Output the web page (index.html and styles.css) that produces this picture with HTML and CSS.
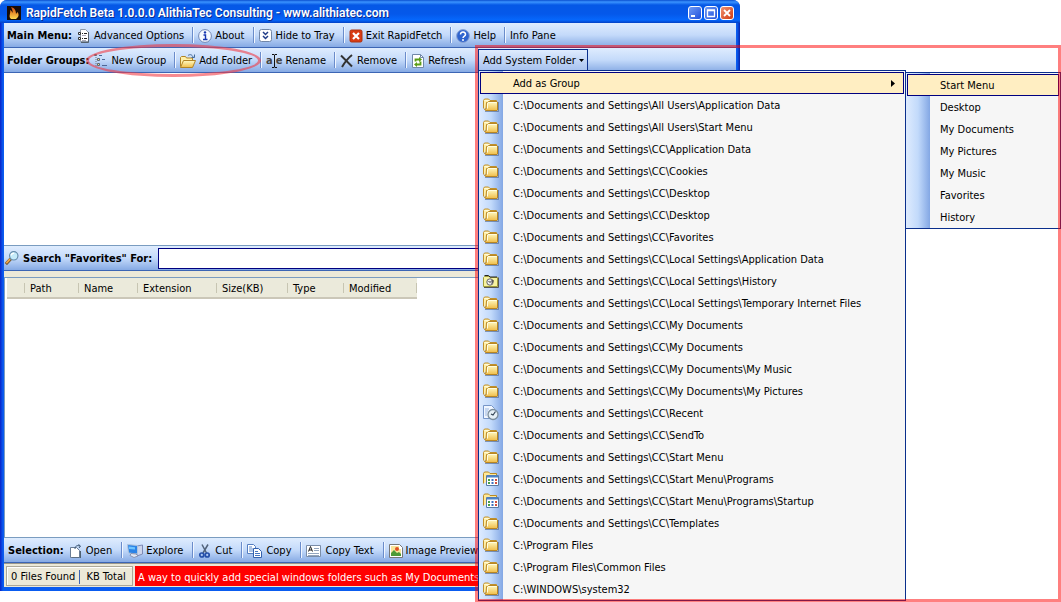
FILE: index.html
```html
<!DOCTYPE html>
<html lang="en">
<head>
<meta charset="utf-8">
<title>RapidFetch Beta</title>
<link rel="stylesheet" href="styles.css">
</head>
<body>
<svg class="sprite" aria-hidden="true">
  <defs>
    <linearGradient id="gold" x1="0" y1="0" x2="0" y2="1"><stop offset="0" stop-color="#fffbc4"/><stop offset="1" stop-color="#f0bd48"/></linearGradient>
    <linearGradient id="flame" x1="0" y1="0" x2="0" y2="1"><stop offset="0" stop-color="#d84a08"/><stop offset="1" stop-color="#ffd850"/></linearGradient>
    <symbol id="folder" viewBox="0 0 16 16">
      <path d="M2 14.500h13.500V5" fill="none" stroke="#4a5f86" opacity=".6"/>
      <path d="M.5 11.500V3.500l1-1.500h4L7 3.500h6.500v2" fill="#fff0a8" stroke="#c0902c"/>
      <path d="M1.500 3.500h4.500l1 1.500h6" fill="none" stroke="#fff9d8"/>
      <path d="M3.500 5.500h1l1-1h8.500l.5.5v8l-.5.5h-11.500l-1-1.500h1.500z" fill="url(#gold)" stroke="#b98622"/>
      <path d="M4.500 11.500V6l.5-.5h8.500" fill="none" stroke="#fffde0"/>
    </symbol>
    <symbol id="history" viewBox="0 0 16 16">
      <path d="M.5 13.500V4.500l1-1H6l1 1h7.500v9z" fill="#f6f2a0" stroke="#a09c38"/>
      <path d="M1.500 2.500h4l1.500 1.500h7" fill="none" stroke="#222"/>
      <path d="M1 14.500h14.500V4.500" fill="none" stroke="#555"/>
      <circle cx="7" cy="9" r="3.200" fill="#eee" stroke="#666"/><path d="M5.500 8l1.500 1.500L9.500 7M8.500 10.500l2-3" fill="none" stroke="#333"/>
    </symbol>
    <symbol id="recent" viewBox="0 0 16 16">
      <path d="M.5.5h8l3 3v10H.5z" fill="#f0f6ff" stroke="#7796c8"/><path d="M2 4h4M2 6h3M2 8h2M2 10h2" stroke="#9db8e0"/>
      <circle cx="10" cy="9.500" r="5" fill="#e6f0f6" stroke="#7b8d9c" stroke-width="1.300"/><path d="M12.500 6.500L10 10l-2-1" fill="none" stroke="#345" stroke-width="1.200"/>
    </symbol>
    <symbol id="programs" viewBox="0 0 16 16">
      <path d="M.5 12.500V2.500l1-1.500h4L7 2.500h6.500v3" fill="#ffe999" stroke="#b98a24"/>
      <path d="M3.500 4.500h12v10h-12z" fill="#fff" stroke="#587aa4"/><path d="M4 5.500h11" stroke="#4c83c8" stroke-width="2"/>
      <path d="M5 9h2M5 12h2" stroke="#4a9f45" stroke-width="2"/><path d="M8.500 9h2M8.500 12h2" stroke="#3d6fc0" stroke-width="2"/><path d="M12 9h2M12 12h2" stroke="#d05040" stroke-width="2"/>
    </symbol>
    <symbol id="options" viewBox="0 0 14 14">
      <path d="M3.500.5h5l3 3v9h-8z" fill="#fff" stroke="#8d99a8"/><path d="M11.500 3v10.500H4" fill="none" stroke="#53606d"/>
      <path d="M1.500 3.500h2v2h-2zM1.500 8.500h2v2h-2z" fill="#fff" stroke="#333"/><path d="M5 4.500h1M7 4.500h3M5 9.500h1M7 9.500h3" stroke="#222"/><path d="M5 6.500h4M5 11.500h4" stroke="#aab"/>
    </symbol>
    <symbol id="about" viewBox="0 0 14 14"><circle cx="7" cy="7" r="6.400" fill="#f6faff" stroke="#7186b4"/><path d="M5.500 6h2v4M5 10.500h4.500" fill="none" stroke="#1636b0" stroke-width="1.400"/><circle cx="7" cy="3.400" r="1.200" fill="#1636b0"/></symbol>
    <symbol id="hide" viewBox="0 0 14 14"><rect x=".5" y=".5" width="12" height="12" rx="2" fill="#fff" stroke="#7186a8"/><path d="M4 3l2.500 2.500L9 3M4 7l2.500 2.500L9 7" fill="none" stroke="#203c88" stroke-width="1.500"/></symbol>
    <symbol id="exit" viewBox="0 0 14 14"><rect x="1" y="1" width="12" height="12" rx="1.500" fill="#d93b13" stroke="#a93212"/><path d="M4 4l6 6M10 4l-6 6" stroke="#fff" stroke-width="2.200"/></symbol>
    <symbol id="help" viewBox="0 0 14 14"><circle cx="7" cy="7" r="6.400" fill="#2e63ce" stroke="#8ba4d4"/><path d="M4.500 5.500c0-3.500 5-3 5 0 0 1.700-2.500 1.500-2.500 3.500" fill="none" stroke="#fff" stroke-width="1.500"/><circle cx="7" cy="11" r="1" fill="#fff"/></symbol>
    <symbol id="newgroup" viewBox="0 0 14 14"><path d="M.5.500h2v1h-2zM3.500 4.500h2v2h-2zM3.500 9.500h2v2h-2z" fill="#ffe27a" stroke="#5b6678"/><path d="M2 3v9" stroke="#777" stroke-dasharray="1 1"/><path d="M5 1.500h3M8 5.500h3M8 11.500h5" stroke="#4f6796"/></symbol>
    <symbol id="openfolder" viewBox="0 0 16 14">
      <path d="M.5 12.500v-9l1-1h4l1 1.500h6v3" fill="#fff0a8" stroke="#b18426"/><path d="M.5 13.500l3-7h12l-3 7z" fill="url(#gold)" stroke="#b18426"/>
      <path d="M8 1.500c2-1.500 4-1 5 1.500M14.500.5v3h-3" fill="none" stroke="#456c9b"/>
    </symbol>
    <symbol id="remove" viewBox="0 0 14 14"><path d="M1 1.500c3 3 6 6 11 11" fill="none" stroke="#333" stroke-width="2"/><path d="M12 1C8 4 5 8 2 13" fill="none" stroke="#333" stroke-width="2"/></symbol>
    <symbol id="refresh" viewBox="0 0 14 14"><path d="M1.500.5h8l3 3v10h-11z" fill="#fff" stroke="#7088a8"/><path d="M9.500.5v3h3" fill="none" stroke="#7088a8"/><path d="M4.500 7.500V5.500h4M9.500 7.500v3h-4" fill="none" stroke="#5b9d16" stroke-width="1.800"/><path d="M8 3l3 2.500L8 8zM6 8l-3 2.500L6 13z" fill="#5b9d16"/></symbol>
    <symbol id="search" viewBox="0 0 16 16"><path d="M1 15l5.500-6" stroke="#74552b" stroke-width="3.500"/><path d="M1.500 14L6 9" stroke="#f3a749" stroke-width="2"/><circle cx="10" cy="5.500" r="4.800" fill="#c5ebfa" stroke="#6389a8" stroke-width="1.300"/><path d="M7 5c.5-2 2-2.500 3.500-2.500" fill="none" stroke="#fff" stroke-width="1.500"/></symbol>
    <symbol id="open" viewBox="0 0 14 14"><path d="M1.500 3.500h6l3 3v7h-9z" fill="#fff" stroke="#6a7d96"/><path d="M11.500 7v7H3" fill="none" stroke="#4f6070"/><path d="M6 5c0-3 2-4 5-3M9.500.5l2 1.500-1.500 2" fill="none" stroke="#3b5674"/></symbol>
    <symbol id="explore" viewBox="0 0 16 14"><path d="M10 2l5.500-1v9l-5.500 2z" fill="#cdd5ec" stroke="#7d8ab6"/><path d="M.5.500l10 1v8.500l-9-1z" fill="#2c83e6" stroke="#b1c4dc"/><path d="M2 2.500l6 .7V5.500L2 5z" fill="#6ec4ff"/><path d="M4 9.500l5 .5 2 2-4 1.500-4-2z" fill="#e3e8f4" stroke="#8893b2"/></symbol>
    <symbol id="cut" viewBox="0 0 14 14"><path d="M4 .5L8.500 9M10 .5L5 9" stroke="#52637a" stroke-width="1.500"/><circle cx="3.800" cy="11" r="2" fill="none" stroke="#244fa9" stroke-width="1.700"/><circle cx="9.200" cy="11" r="2" fill="none" stroke="#244fa9" stroke-width="1.700"/></symbol>
    <symbol id="copy" viewBox="0 0 16 14"><path d="M.5.500h6l2 2v7h-8z" fill="#fff" stroke="#547dc0"/><path d="M2 3h3M2 5h4M2 7h4" stroke="#5d89cc"/><path d="M6.500 4.500h5l3 3v6h-8z" fill="#fff" stroke="#3260ad"/><path d="M8 7.500h3M8 9.500h5M8 11.500h5" stroke="#4474c0"/></symbol>
    <symbol id="copytext" viewBox="0 0 16 14"><path d="M.5 1.500h14v11H.5z" fill="#fff" stroke="#7a8da8"/><path d="M2.500 7.500l2-5 2 5M3 6h3" fill="none" stroke="#222"/><path d="M8 4.500h5M8 6.500h5M2 9.500h11M2 11.500h11" stroke="#93a5be"/></symbol>
    <symbol id="image" viewBox="0 0 14 14"><path d="M.5.5h10l3 3v10H.500z" fill="#fff" stroke="#777"/><path d="M2 2h8v3h2v7H2z" fill="#f8e59a"/><circle cx="8" cy="5" r="2" fill="#e05024"/><path d="M2 12V9l3-3 3 3 2-1 2 2v2z" fill="#4d9a36"/></symbol>
    <symbol id="app" viewBox="0 0 14 14"><path d="M0 0h14v14H0z" fill="#180c08"/><path d="M4 13C1 10 4 8 3 4c2 1 2 2 2.500 3C6 5 5 3 4 1c4 1 5 4 5 7l1.500-2c2 3 1 5-1.500 7z" fill="url(#flame)"/></symbol>
  </defs>
</svg>

<div class="desktop">
  <main class="window">
    <header class="titlebar">
      <svg class="icon"><use href="#app"/></svg>
      <h1>RapidFetch Beta 1.0.0.0 AlithiaTec Consulting - www.alithiatec.com</h1>
      <button class="control" aria-label="Minimize"><svg viewBox="0 0 12 12"><path d="M2 9h4" stroke="#fff" stroke-width="2"/></svg></button>
      <button class="control" aria-label="Maximize"><svg viewBox="0 0 12 12"><path d="M2.500 3.500h7v6h-7zM2 3h8" fill="none" stroke="#fff" stroke-width="1.300"/></svg></button>
      <button class="control close" aria-label="Close"><svg viewBox="0 0 12 12"><path d="M3 3l6 6M9 3l-6 6" stroke="#fff" stroke-width="1.800"/></svg></button>
    </header>

    <nav class="toolbar" aria-label="Main Menu">
      <strong>Main Menu:</strong>
      <button class="tool"><svg class="icon"><use href="#options"/></svg>Advanced Options</button>
      <button class="tool"><svg class="icon"><use href="#about"/></svg>About</button>
      <button class="tool"><svg class="icon"><use href="#hide"/></svg>Hide to Tray</button>
      <button class="tool"><svg class="icon"><use href="#exit"/></svg>Exit RapidFetch</button>
      <button class="tool"><svg class="icon"><use href="#help"/></svg>Help</button>
      <button class="tool">Info Pane</button>
    </nav>

    <nav class="toolbar" aria-label="Folder Groups">
      <div class="tools">
        <strong>Folder Groups:</strong>
        <button class="tool"><svg class="icon"><use href="#newgroup"/></svg>New Group</button>
        <button class="tool"><svg class="icon wide"><use href="#openfolder"/></svg>Add Folder</button>
        <button class="tool"><span class="rename" aria-hidden="true">a<svg viewBox="0 0 5 14"><path d="M0 .5h2l.5 1 .5-1h2M2.500 1v12M0 13.500h2l.5-1 .5 1h2" fill="none" stroke="#111"/></svg>e</span>Rename</button>
        <button class="tool"><svg class="icon"><use href="#remove"/></svg>Remove</button>
        <button class="tool"><svg class="icon"><use href="#refresh"/></svg>Refresh</button>
        <span class="ring"></span>
      </div>
      <div class="dropdown">
        <button class="dropbutton" aria-expanded="true">Add System Folder<svg viewBox="0 0 5 3"><path d="M0 0h5L2.500 3z"/></svg></button>
        <ul class="menu">
          <li class="active"><button>Add as Group<svg class="arrow" viewBox="0 0 4 7"><path d="M0 0l4 3.500L0 7z"/></svg></button>
            <ul class="menu submenu">
              <li class="active"><button>Start Menu</button></li>
              <li><button>Desktop</button></li>
              <li><button>My Documents</button></li>
              <li><button>My Pictures</button></li>
              <li><button>My Music</button></li>
              <li><button>Favorites</button></li>
              <li><button>History</button></li>
            </ul>
          </li>
          <li><svg class="icon"><use href="#folder"/></svg><button>C:\Documents and Settings\All Users\Application Data</button></li>
          <li><svg class="icon"><use href="#folder"/></svg><button>C:\Documents and Settings\All Users\Start Menu</button></li>
          <li><svg class="icon"><use href="#folder"/></svg><button>C:\Documents and Settings\CC\Application Data</button></li>
          <li><svg class="icon"><use href="#folder"/></svg><button>C:\Documents and Settings\CC\Cookies</button></li>
          <li><svg class="icon"><use href="#folder"/></svg><button>C:\Documents and Settings\CC\Desktop</button></li>
          <li><svg class="icon"><use href="#folder"/></svg><button>C:\Documents and Settings\CC\Desktop</button></li>
          <li><svg class="icon"><use href="#folder"/></svg><button>C:\Documents and Settings\CC\Favorites</button></li>
          <li><svg class="icon"><use href="#folder"/></svg><button>C:\Documents and Settings\CC\Local Settings\Application Data</button></li>
          <li><svg class="icon"><use href="#history"/></svg><button>C:\Documents and Settings\CC\Local Settings\History</button></li>
          <li><svg class="icon"><use href="#folder"/></svg><button>C:\Documents and Settings\CC\Local Settings\Temporary Internet Files</button></li>
          <li><svg class="icon"><use href="#folder"/></svg><button>C:\Documents and Settings\CC\My Documents</button></li>
          <li><svg class="icon"><use href="#folder"/></svg><button>C:\Documents and Settings\CC\My Documents</button></li>
          <li><svg class="icon"><use href="#folder"/></svg><button>C:\Documents and Settings\CC\My Documents\My Music</button></li>
          <li><svg class="icon"><use href="#folder"/></svg><button>C:\Documents and Settings\CC\My Documents\My Pictures</button></li>
          <li><svg class="icon"><use href="#recent"/></svg><button>C:\Documents and Settings\CC\Recent</button></li>
          <li><svg class="icon"><use href="#folder"/></svg><button>C:\Documents and Settings\CC\SendTo</button></li>
          <li><svg class="icon"><use href="#folder"/></svg><button>C:\Documents and Settings\CC\Start Menu</button></li>
          <li><svg class="icon"><use href="#programs"/></svg><button>C:\Documents and Settings\CC\Start Menu\Programs</button></li>
          <li><svg class="icon"><use href="#programs"/></svg><button>C:\Documents and Settings\CC\Start Menu\Programs\Startup</button></li>
          <li><svg class="icon"><use href="#folder"/></svg><button>C:\Documents and Settings\CC\Templates</button></li>
          <li><svg class="icon"><use href="#folder"/></svg><button>C:\Program Files</button></li>
          <li><svg class="icon"><use href="#folder"/></svg><button>C:\Program Files\Common Files</button></li>
          <li><svg class="icon"><use href="#folder"/></svg><button>C:\WINDOWS\system32</button></li>
        </ul>
      </div>
    </nav>

    <section class="groups" aria-label="Groups"></section>

    <form class="searchbar">
      <svg class="icon wide"><use href="#search"/></svg>
      <label for="query">Search "Favorites" For:</label>
      <input id="query" type="text">
    </form>

    <section class="results">
      <table>
        <thead><tr><th class="c-icon"></th><th class="c-path">Path</th><th class="c-name">Name</th><th class="c-ext">Extension</th><th class="c-size">Size(KB)</th><th class="c-type">Type</th><th class="c-mod">Modified</th></tr></thead>
      </table>
    </section>

    <nav class="toolbar selection" aria-label="Selection">
      <strong>Selection:</strong>
      <button class="tool"><svg class="icon"><use href="#open"/></svg>Open</button>
      <button class="tool"><svg class="icon wide"><use href="#explore"/></svg>Explore</button>
      <button class="tool"><svg class="icon"><use href="#cut"/></svg>Cut</button>
      <button class="tool"><svg class="icon wide"><use href="#copy"/></svg>Copy</button>
      <button class="tool"><svg class="icon wide"><use href="#copytext"/></svg>Copy Text</button>
      <button class="tool"><svg class="icon"><use href="#image"/></svg>Image Preview</button>
    </nav>

    <footer class="status">
      <div class="counts"><span>0 Files Found</span><span>KB Total</span></div>
      <p>A way to quickly add special windows folders such as My Documents, Desktop</p>
    </footer>
  </main>
  <div class="outline"></div>
</div>
</body>
</html>
```

FILE: styles.css
```css
* { box-sizing: border-box; }
body {
  margin: 0;
  background: #fff;
  color: #000;
  font: 11px/14px "DejaVu Sans Condensed", "DejaVu Sans", sans-serif;
}
button { font: inherit; color: inherit; background: none; border: 0; padding: 0; text-align: left; white-space: nowrap; }
ul { list-style: none; margin: 0; padding: 0; }
.sprite { position: absolute; width: 0; height: 0; }
.icon { width: 14px; height: 14px; flex: none; }
.icon.wide { width: 16px; }

.desktop { position: relative; height: 100vh; min-height: 602px; padding: 0 321px 11px 0; }
.window {
  display: flex;
  flex-direction: column;
  height: 100%;
  padding: 0 4px 4px;
  background: linear-gradient(90deg, #0a22c8, #0a5cf0 3px, #0a5cf0 calc(100% - 3px), #0a22a8);
  border-radius: 7px 7px 0 0;
}

.titlebar {
  display: flex;
  align-items: center;
  gap: 2px;
  height: 23px;
  margin: 0 -4px;
  padding: 3px 6px 0 7px;
  border-radius: 7px 7px 0 0;
  background: linear-gradient(#0a4fd0, #3a93ff 2px, #0558e6 5px, #0558ea 14px, #0667fc 20px, #0340c4);
}
.titlebar h1 {
  flex: 1;
  margin: 0;
  padding-left: 3px;
  color: #fff;
  font: 600 12px/16px Roboto, "Noto Sans", sans-serif;
  text-shadow: 1px 1px #0a2a90;
  white-space: nowrap;
}
.control { width: 14px; height: 14px; border: 1px solid #fff; border-radius: 3px; background: linear-gradient(135deg, #6f9bf5, #1f4fdc); }
.control.close { background: linear-gradient(135deg, #f09070, #d03a10); }
.control svg { display: block; width: 12px; height: 12px; }

.toolbar {
  display: flex;
  align-items: center;
  flex: none;
  height: 25px;
  padding-left: 3px;
  line-height: 16px;
  background: linear-gradient(#dfecfe, #c4dafa 50%, #86aae4);
  border-bottom: 1px solid #3c65b4;
}
strong, label { padding-top: 2px; font-weight: bold; white-space: nowrap; }
.tools { position: relative; display: flex; align-items: center; flex: 0 0 471px; height: 100%; }
.tool { display: flex; align-items: center; gap: 3px; height: 16px; padding: 2px 8px 0 5px; }
.tool + .tool { border-left: 1px solid #6a8ccb; box-shadow: inset 1px 0 #f0f6ff; }
.selection { padding-left: 4px; }
.selection .tool { padding-right: 9px; }
.rename { display: flex; align-items: center; color: #444; font-weight: bold; }
.rename svg { width: 5px; height: 14px; margin: 0 -1px; }
.ring { position: absolute; left: 79px; top: -4px; width: 175px; height: 33px; border: 3px solid rgba(240, 60, 70, .6); border-radius: 50%; }

.dropdown { position: relative; height: 22px; }
.dropbutton {
  display: flex;
  align-items: center;
  justify-content: space-between;
  width: 110px;
  height: 22px;
  padding: 0 3px 0 4px;
  border: 1px solid #0a2f8c;
  border-bottom: 0;
  background: linear-gradient(#dfecfe, #a5c0ee);
}
.dropbutton svg { width: 5px; height: 3px; flex: none; }
.menu {
  position: absolute;
  z-index: 2;
  top: 21px;
  left: 0;
  width: 428px;
  padding: 1px 0 0;
  border: 1px solid #0a2f8c;
  background: linear-gradient(90deg, #deebfe, #c2dafb 12px, #83a7e4 24px, #f6f6f6 24px);
}
.menu li { position: relative; display: flex; align-items: center; height: 22px; padding-left: 4px; }
.menu .icon { width: 16px; height: 16px; }
.menu li button { padding: 1px 0 0 14px; flex: 1; }
.menu li.active { margin: 0 1px; padding-left: 32px; border: 1px solid #000080; background: #ffeec2; }
.menu li.active button { display: flex; align-items: center; justify-content: space-between; padding: 1px 8px 0 0; }
.menu .submenu { top: -1px; left: 424px; width: 156px; }
.menu .submenu li:not(.active) { padding-left: 34px; }
.arrow { width: 4px; height: 7px; }

.groups { flex: 0 0 172px; background: #fff; }
.searchbar {
  display: flex;
  align-items: center;
  flex: none;
  height: 26px;
  border-top: 1px solid #7a9cc0;
  border-bottom: 1px solid #3c65b4;
  background: linear-gradient(#dfecfe, #c4dafa 50%, #86aae4);
}
.searchbar label { padding: 2px 6px 0 3px; }
.searchbar input { flex: 1; min-width: 0; height: 21px; border: 1px solid #000080; border-radius: 0; background: #fff; font: inherit; }
.results { flex: 1; margin-top: 6px; padding-left: 2px; border: 1px solid #7a9cc0; border-right: 0; background: #fff; box-shadow: 0 -6px #ece9d8; }
table { table-layout: fixed; width: 410px; border-collapse: collapse; background: #ebeadb; border-bottom: 2px solid #cbc7b8; }
th { height: 20px; padding: 2px 0 0 5px; font-weight: normal; text-align: left; background: linear-gradient(#c7c5b2, #c7c5b2) right center / 1px 10px no-repeat; }
.c-icon { width: 18px; }
.c-path { width: 54px; }
.c-name { width: 59px; }
.c-ext { width: 79px; }
.c-size { width: 71px; }
.c-type { width: 56px; }
.c-mod { width: 73px; }

.status { display: flex; flex: none; gap: 2px; height: 24px; padding: 2px 0 1px 2px; background: #ece9d8; border-top: 1px solid #9a978a; }
.counts { display: flex; align-items: center; width: 127px; padding: 2px 4px 0; border: 1px solid #aca899; background: #ece9d8; box-shadow: inset 1px 1px #fff; }
.counts span { white-space: nowrap; }
.counts span + span { margin-left: 4px; padding-left: 6px; border-left: 1px solid #3c65b4; }
.status p { flex: 1; min-width: 0; margin: 0; padding: 0 3px; overflow: hidden; background: #f00; color: #fff; line-height: 23px; white-space: nowrap; }
.outline { position: absolute; z-index: 5; top: 45px; right: 0; bottom: 0; left: 475px; border: 3px solid rgba(255, 0, 0, .5); pointer-events: none; }
```
